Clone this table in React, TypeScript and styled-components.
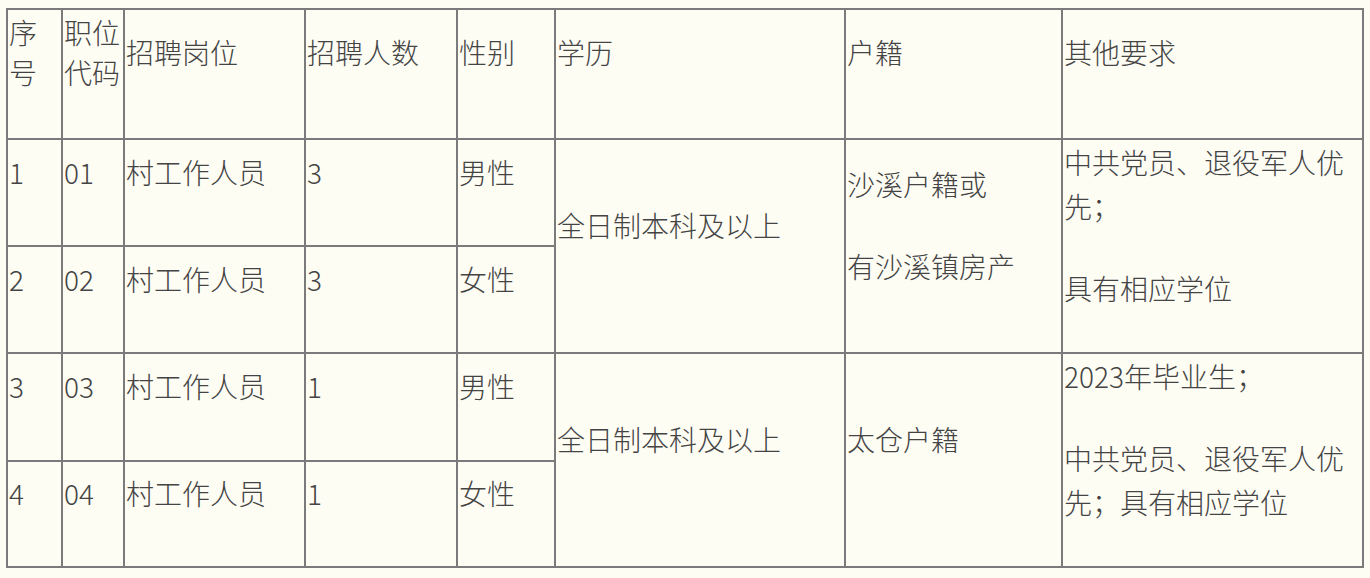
import React from "react";
import styled, { createGlobalStyle } from "styled-components";

const Global = createGlobalStyle`
  html, body {
    margin: 0;
    padding: 0;
    background: #fefdf4;
  }
  body {
    font-family: "Noto Sans CJK SC", "Noto Sans", sans-serif;
    color: #444;
  }
`;

const Page = styled.div`
  padding: 8px 0 0 6px;
  width: 1370px;
  height: 578px;
  box-sizing: border-box;
  background: #fefdf4;
`;

const Table = styled.table`
  border-collapse: collapse;
  table-layout: fixed;
  width: 1358px;
  border: 2px solid #7b7b7b;
  font-size: 28px;
  font-weight: 300;
`;

const Row = styled.tr<{ $h: number }>`
  height: ${(p) => p.$h}px;
`;

const HeadCell = styled.th`
  border: 2px solid #7b7b7b;
  padding: 0 0 44px 1px;
  vertical-align: middle;
  text-align: left;
  font-weight: 300;
  line-height: 40px;
  word-break: break-all;
`;

const Cell = styled.td`
  border: 2px solid #7b7b7b;
  padding: 0 0 42px 1px;
  vertical-align: middle;
  text-align: left;
  line-height: 44px;
  word-break: break-all;
`;

const Para = styled.p`
  margin: 0;
  & + & {
    margin-top: 38px;
  }
`;

const widths = [55, 62, 181, 152, 98, 290, 217, 301];

export default function App() {
  return (
    <>
      <Global />
      <Page>
        <Table>
          <colgroup>
            {widths.map((w, i) => (
              <col key={i} style={{ width: w }} />
            ))}
          </colgroup>
          <thead>
            <Row $h={130}>
              <HeadCell>序号</HeadCell>
              <HeadCell>职位代码</HeadCell>
              <HeadCell>招聘岗位</HeadCell>
              <HeadCell>招聘人数</HeadCell>
              <HeadCell>性别</HeadCell>
              <HeadCell>学历</HeadCell>
              <HeadCell>户籍</HeadCell>
              <HeadCell>其他要求</HeadCell>
            </Row>
          </thead>
          <tbody>
            <Row $h={107}>
              <Cell>1</Cell>
              <Cell>01</Cell>
              <Cell>村工作人员</Cell>
              <Cell>3</Cell>
              <Cell>男性</Cell>
              <Cell rowSpan={2}>全日制本科及以上</Cell>
              <Cell rowSpan={2}>
                <Para>沙溪户籍或</Para>
                <Para>有沙溪镇房产</Para>
              </Cell>
              <Cell rowSpan={2}>
                <Para>中共党员、退役军人优先；</Para>
                <Para>具有相应学位</Para>
              </Cell>
            </Row>
            <Row $h={107}>
              <Cell>2</Cell>
              <Cell>02</Cell>
              <Cell>村工作人员</Cell>
              <Cell>3</Cell>
              <Cell>女性</Cell>
            </Row>
            <Row $h={107}>
              <Cell>3</Cell>
              <Cell>03</Cell>
              <Cell>村工作人员</Cell>
              <Cell>1</Cell>
              <Cell>男性</Cell>
              <Cell rowSpan={2}>全日制本科及以上</Cell>
              <Cell rowSpan={2}>太仓户籍</Cell>
              <Cell rowSpan={2}>
                <Para>2023年毕业生；</Para>
                <Para>中共党员、退役军人优先；具有相应学位</Para>
              </Cell>
            </Row>
            <Row $h={106}>
              <Cell>4</Cell>
              <Cell>04</Cell>
              <Cell>村工作人员</Cell>
              <Cell>1</Cell>
              <Cell>女性</Cell>
            </Row>
          </tbody>
        </Table>
      </Page>
    </>
  );
}
